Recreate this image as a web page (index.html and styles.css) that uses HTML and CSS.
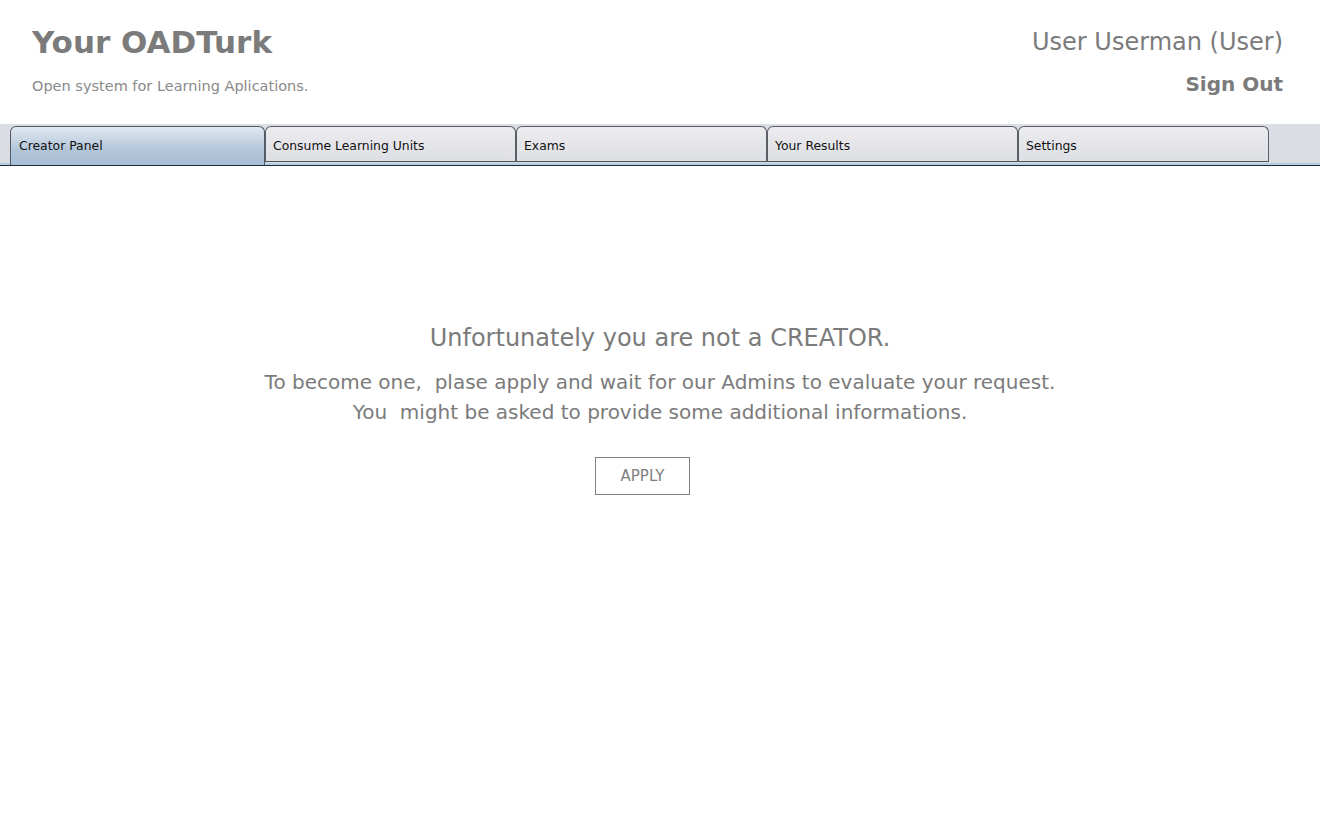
FILE: index.html
```html
<!DOCTYPE html>
<html>
<head>
<meta charset="utf-8">
<link rel="stylesheet" href="styles.css">
</head>
<body>
<header class="top">
  <div class="brand">
    <div class="title">Your OADTurk</div>
    <div class="subtitle">Open system for Learning Aplications.</div>
  </div>
  <div class="account">
    <div class="user">User Userman (User)</div>
    <div class="signout">Sign Out</div>
  </div>
</header>
<nav class="tabbar">
  <div class="tab active">Creator Panel</div>
  <div class="tab">Consume Learning Units</div>
  <div class="tab">Exams</div>
  <div class="tab">Your Results</div>
  <div class="tab">Settings</div>
</nav>
<main class="content">
  <div class="headline">Unfortunately you are not a CREATOR.</div>
  <div class="info">To become one,&nbsp; plase apply and wait for our Admins to evaluate your request.<br>You&nbsp; might be asked to provide some additional informations.</div>
  <button class="apply">APPLY</button>
</main>
</body>
</html>
```
FILE: styles.css
```css
html, body {
  margin: 0;
  padding: 0;
  background: #ffffff;
  font-family: "DejaVu Sans", sans-serif;
}
.top {
  display: flex;
  justify-content: space-between;
  padding: 0 37px 0 32px;
  height: 124px;
  box-sizing: border-box;
}
.brand {
  padding-top: 24px;
}
.title {
  font-size: 31px;
  font-weight: bold;
  color: #7b7b7b;
  line-height: 36px;
}
.subtitle {
  margin-top: 17px;
  font-size: 14.5px;
  color: #8a8a8a;
  line-height: 18px;
}
.account {
  padding-top: 28px;
  text-align: right;
}
.user {
  font-size: 24px;
  color: #7b7b7b;
  line-height: 28px;
}
.signout {
  margin-top: 16px;
  font-size: 20px;
  font-weight: bold;
  color: #7b7b7b;
  line-height: 24px;
}
.tabbar {
  display: flex;
  align-items: flex-end;
  height: 42px;
  box-sizing: border-box;
  padding: 3px 0 0 10px;
  background: linear-gradient(#dadde3, #dadde3 39px, #b7cde3 39px, #b7cde3 41px, #1f2a38 41px);
  border-bottom: 1px solid #1f2a38;
}
.tab {
  width: 251px;
  height: 36px;
  box-sizing: border-box;
  margin-bottom: 3px;
  padding: 11px 0 0 7px;
  font-size: 12.4px;
  color: #111;
  background: linear-gradient(#ececef, #dedfe4);
  border: 1px solid #5a5e66;
  border-bottom-color: #4e535a;
  border-radius: 6px 6px 0 0;
}
.tab.active {
  width: 255px;
  height: 39px;
  margin-bottom: 0;
  padding-left: 8px;
  background: linear-gradient(#e2e8ef, #b2c6da 60%, #a7bdd3);
  border-color: #4f5a66;
  border-bottom: none;
}
.content {
  display: flex;
  flex-direction: column;
  align-items: center;
  padding-top: 157px;
  color: #7b7b7b;
}
.headline {
  font-size: 24px;
  line-height: 30px;
}
.info {
  margin-top: 14px;
  font-size: 20px;
  line-height: 30px;
  text-align: center;
}
.apply {
  margin-top: 30px;
  margin-right: 35px;
  width: 95px;
  height: 38px;
  background: #fff;
  border: 1px solid #808080;
  color: #808080;
  font-family: "DejaVu Sans", sans-serif;
  font-size: 15px;
  padding: 0;
}
```
